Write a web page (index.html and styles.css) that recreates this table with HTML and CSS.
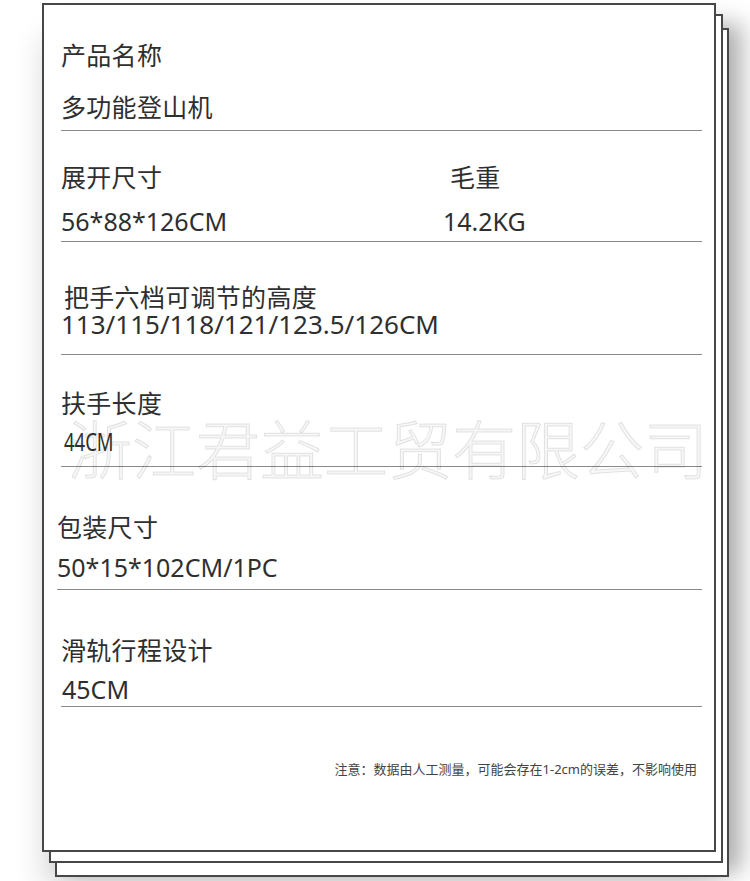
FILE: index.html
```html
<!DOCTYPE html>
<html lang="zh-CN">
<head>
    <meta charset="UTF-8">
    <meta name="viewport" content="width=device-width, initial-scale=1.0">
    <title>多功能登山机 参数</title>
    <link rel="stylesheet" href="styles.css">
</head>
<body>

    <div class="sheet">
        <div class="watermark">浙江君益工贸有限公司</div>

        <div class="spec spec-name">
            <div class="spec-label">产品名称</div>
            <div class="spec-value cjk">多功能登山机</div>
        </div>

        <div class="spec spec-size">
            <div class="spec-cols">
                <div>
                    <div class="spec-label">展开尺寸</div>
                    <div class="spec-value">56*88*126CM</div>
                </div>
                <div class="spec-col-right">
                    <div class="spec-label">毛重</div>
                    <div class="spec-value">14.2KG</div>
                </div>
            </div>
        </div>

        <div class="spec spec-handle">
            <div class="spec-label">把手六档可调节的高度</div>
            <div class="spec-value">113/115/118/121/123.5/126CM</div>
        </div>

        <div class="spec spec-arm">
            <div class="spec-label">扶手长度</div>
            <div class="spec-value"><span class="narrow">44CM</span></div>
        </div>

        <div class="spec spec-pack">
            <div class="spec-label">包装尺寸</div>
            <div class="spec-value">50*15*102CM/1PC</div>
        </div>

        <div class="spec spec-rail">
            <div class="spec-label">滑轨行程设计</div>
            <div class="spec-value">45CM</div>
        </div>

        <p class="note">注意：数据由人工测量，可能会存在1-2cm的误差，不影响使用</p>
    </div>

</body>
</html>
```

FILE: styles.css
```css
html {
    margin: 0;
    padding: 0;
    overflow: hidden;
}

body {
    margin: 0;
    padding: 0;
    min-height: 881px;
    background: #fff;
    font-family: "Noto Sans", "Noto Sans CJK SC", sans-serif;
    color: #2f2f2f;
}

/* the front page; the two pages behind it are drawn with shadows */
.sheet {
    position: relative;
    box-sizing: border-box;
    width: 674px;
    height: 849px;
    margin: 3px 0 0 42px;
    padding: 0 12px 0 17px;
    background: #fff;
    border: 2px solid #474747;
    box-shadow:
        7px 11px 0 -2px #fff,
        7px 11px 0 0 #474747,
        13px 25px 0 -2px #fff,
        13px 25px 0 0 #474747,
        26px 20px 22px rgba(0, 0, 0, 0.3),
        0 34px 28px rgba(0, 0, 0, 0.14);
}

.watermark {
    position: absolute;
    top: 409px;
    left: 24px;
    font-family: "Noto Sans CJK SC", sans-serif;
    font-size: 64px;
    font-weight: 300;
    line-height: 64px;
    white-space: nowrap;
    color: rgba(0, 0, 0, 0.03);
    -webkit-text-stroke: 1px rgba(0, 0, 0, 0.11);
    pointer-events: none;
}

.spec {
    border-bottom: 1px solid #8a8a8a;
    padding: 33px 0 8px;
}

.spec-label {
    font-size: 25px;
    line-height: 30px;
    letter-spacing: 0.3px;
}

.spec-value {
    margin-top: 9px;
    font-size: 25px;
    line-height: 30px;
}

.spec-value.cjk {
    letter-spacing: 0.3px;
}

.spec-cols {
    display: grid;
    grid-template-columns: 382px 1fr;
}

.spec-col-right .spec-label {
    padding-left: 7px;
}

/* small per-row offsets */
.spec-name {
    padding: 35px 0 8px;
}

.spec-name .spec-value {
    margin-top: 22px;
}

.spec-size {
    padding: 31px 0 5px;
}

.spec-size .spec-value {
    margin-top: 14px;
}

.spec-handle {
    padding: 42px 0 17px;
}

.spec-handle .spec-label,
.spec-handle .spec-value {
    line-height: 26px;
}

.spec-handle .spec-label {
    padding-left: 3px;
}

.spec-handle .spec-value {
    margin-top: 1px;
    font-size: 26px;
}

.spec-arm {
    padding: 33px 0 10px;
}

.spec-arm .spec-value {
    margin-top: 8px;
    padding-left: 3px;
}

.narrow {
    display: inline-block;
    transform: scaleX(0.74);
    transform-origin: left center;
}

.spec-pack {
    margin-left: -4px;
    padding: 45px 0 7px;
}

.spec-pack .spec-value {
    margin-top: 10px;
}

.spec-rail {
    padding: 45px 0 2px;
}

.spec-rail .spec-value {
    margin-top: 9px;
    padding-left: 1px;
}

.note {
    margin: 52px 5px 0 0;
    text-align: right;
    font-size: 13px;
    line-height: 20px;
    color: #444;
}
```
